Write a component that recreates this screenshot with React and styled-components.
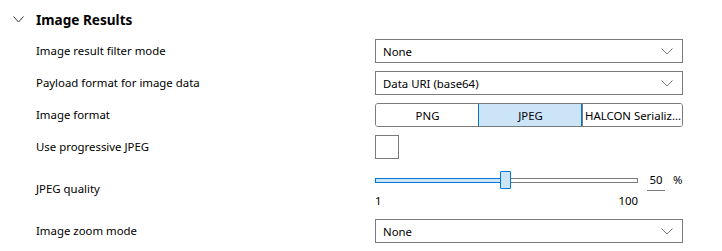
import React from "react";
import styled, { createGlobalStyle } from "styled-components";

const Global = createGlobalStyle`
  html, body { margin: 0; padding: 0; background: #fff; }
  body { font-family: "Segoe UI", "Noto Sans", "Open Sans", sans-serif; color: #000; }
`;

const Panel = styled.div`
  width: 722px;
  height: 251px;
  display: flex;
  flex-direction: column;
  gap: 8px;
  overflow: hidden;
`;

const Header = styled.div`
  height: 23px;
  padding-top: 8px;
  display: flex;
  align-items: center;
  gap: 12px;
  padding-left: 13px;
`;

const Title = styled.span`
  font-size: 13.6px;
  font-weight: 700;
  line-height: 23px;
`;

const Row = styled.div`
  display: grid;
  grid-template-columns: 339px 308px;
  padding-left: 36px;
  height: ${(p) => p.$h || 24}px;
  align-items: center;
`;

const Label = styled.div`
  font-size: 11.4px;
  line-height: 16px;
`;

const Select = styled.div`
  box-sizing: border-box;
  height: 24px;
  border: 1px solid #7a7a7a;
  display: flex;
  align-items: center;
  justify-content: space-between;
  padding: 0 9px 0 7px;
  font-size: 11.4px;
`;

const Segments = styled.div`
  box-sizing: border-box;
  height: 24px;
  border: 1px solid #7a7a7a;
  border-radius: 3px;
  display: grid;
  grid-template-columns: 102px 104px 1fr;
  overflow: hidden;
`;

const Segment = styled.div`
  box-sizing: border-box;
  display: flex;
  align-items: center;
  justify-content: center;
  font-size: 11.4px;
  white-space: nowrap;
  padding: 0 1px 0 2px;
  margin: ${(p) => (p.$active ? "-1px 0" : "0")};
  background: ${(p) => (p.$active ? "#cce4f7" : "#fff")};
  border: ${(p) => (p.$active ? "1px solid #0078d7" : "none")};
  border-left: ${(p) => (p.$active ? "1px solid #0078d7" : p.$first ? "none" : "1px solid #7a7a7a")};
`;

const Check = styled.div`
  box-sizing: border-box;
  width: 24px;
  height: 24px;
  border: 1px solid #7a7a7a;
  background: #fff;
`;

const SliderWrap = styled.div`
  display: flex;
  align-items: flex-start;
  height: 44px;
`;

const SliderCol = styled.div`
  width: 263px;
  display: flex;
  flex-direction: column;
`;

const TrackArea = styled.div`
  position: relative;
  height: 26px;
`;

const Track = styled.div`
  position: absolute;
  left: 0;
  right: 0;
  top: 11px;
  height: 5px;
  box-sizing: border-box;
  border: 1px solid #7a7a7a;
  background: #fff;
`;

const Fill = styled.div`
  position: absolute;
  left: 0;
  top: 11px;
  height: 5px;
  box-sizing: border-box;
  border: 1px solid #0078d7;
  background: #cce4f7;
`;

const Thumb = styled.div`
  position: absolute;
  top: 4px;
  width: 11px;
  height: 18px;
  box-sizing: border-box;
  border: 1px solid #0078d7;
  background: #cce4f7;
  border-radius: 1px;
`;

const Ticks = styled.div`
  display: flex;
  justify-content: space-between;
  font-size: 11.4px;
  line-height: 16px;
`;

const ValueBox = styled.div`
  margin-left: 9px;
  margin-top: 5px;
  width: 18px;
  height: 18px;
  border-bottom: 1px solid #7a7a7a;
  font-size: 11.4px;
  line-height: 16px;
  text-align: center;
`;

const Unit = styled.div`
  margin-left: 8px;
  margin-top: 5px;
  font-size: 11.4px;
  line-height: 16px;
`;

const Chevron = ({ w = 12, h = 6, color = "#7a7a7a" }) => (
  <svg width={w} height={h + 1} viewBox={`0 0 ${w} ${h + 1}`} fill="none">
    <path d={`M0.5 0.5 L${w / 2} ${h} L${w - 0.5} 0.5`} stroke={color} strokeWidth="1" />
  </svg>
);

const Dropdown = ({ value }) => (
  <Select>
    <span>{value}</span>
    <Chevron />
  </Select>
);

export default function App() {
  const min = 1, max = 100, val = 50, width = 263, thumbW = 11;
  const pos = ((val - min) / (max - min)) * (width - thumbW);
  return (
    <>
      <Global />
      <Panel>
        <Header>
          <Chevron w={11} h={6} color="#333" />
          <Title>Image Results</Title>
        </Header>
        <Row>
          <Label>Image result filter mode</Label>
          <Dropdown value="None" />
        </Row>
        <Row>
          <Label>Payload format for image data</Label>
          <Dropdown value="Data URI (base64)" />
        </Row>
        <Row>
          <Label>Image format</Label>
          <Segments>
            <Segment $first>PNG</Segment>
            <Segment $active>JPEG</Segment>
            <Segment>HALCON Serializ...</Segment>
          </Segments>
        </Row>
        <Row>
          <Label>Use progressive JPEG</Label>
          <Check />
        </Row>
        <Row $h={44}>
          <Label>JPEG quality</Label>
          <SliderWrap>
            <SliderCol>
              <TrackArea>
                <Track />
                <Fill style={{ width: pos + 2 }} />
                <Thumb style={{ left: pos }} />
              </TrackArea>
              <Ticks>
                <span>1</span>
                <span>100</span>
              </Ticks>
            </SliderCol>
            <ValueBox>50</ValueBox>
            <Unit>%</Unit>
          </SliderWrap>
        </Row>
        <Row>
          <Label>Image zoom mode</Label>
          <Dropdown value="None" />
        </Row>
      </Panel>
    </>
  );
}
